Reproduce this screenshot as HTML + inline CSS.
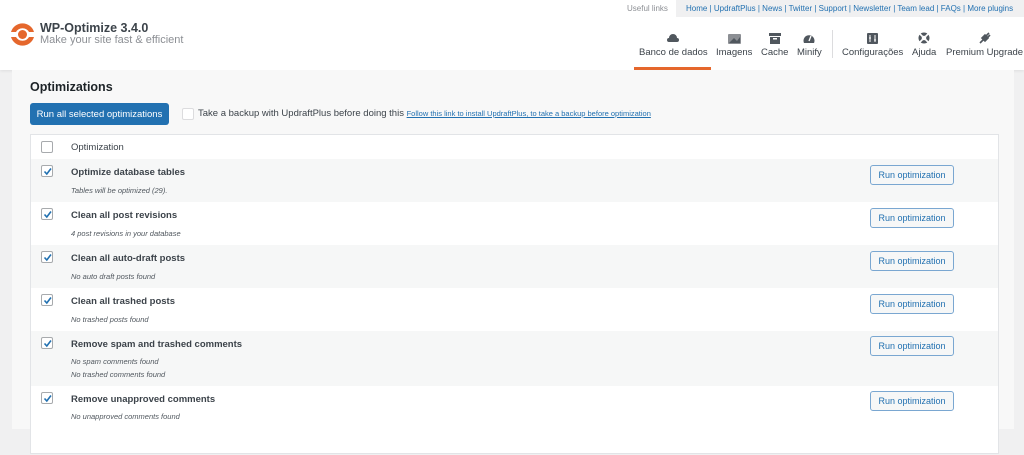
<!DOCTYPE html>
<html><head><meta charset="utf-8"><style>
*{margin:0;padding:0;box-sizing:border-box}
body{width:1024px;height:429px;overflow:hidden;background:#f0f0f1;font-family:"Liberation Sans",sans-serif;color:#3c434a;position:relative}
.hdr{position:absolute;left:0;top:0;width:1024px;height:70px;background:#fff;box-shadow:0 1px 3px rgba(0,0,0,.08)}
.abs{position:absolute;white-space:nowrap}
.tab{position:absolute;left:676px;top:0;width:348px;height:17px;background:#f0f0f1}
.links{font-size:8px;color:#2271b1;top:4px;left:686px}
.nav{top:31px;text-align:center;font-size:9.5px;color:#3c434a}
.nav .ic{height:14px;display:flex;justify-content:center;align-items:center;margin-bottom:2px}
.panel{position:absolute;left:12px;top:70px;width:1002px;height:359px;background:#f8f8f8}
.btn{position:absolute;left:30px;top:103px;width:139px;height:22px;background:#2271b1;color:#fff;font-size:9.5px;border-radius:3px;line-height:23px;text-align:center}
.tbl{position:absolute;left:30px;top:134px;width:969px;height:320px;background:#fff;border:1px solid #e2e4e7}
.row{position:absolute;left:0;width:967px}
.g{background:#f6f7f7}
.cb{position:absolute;left:10px;width:12px;height:12px;border:1px solid #a7aaad;border-radius:2px;background:#fff}
.cb svg{position:absolute;left:1px;top:1px}
.t{position:absolute;left:40px;font-size:9.5px;font-weight:bold;color:#3c434a}
.s{position:absolute;left:40px;font-size:7.5px;font-style:italic;color:#50575e}
.ro{position:absolute;left:839px;width:84px;height:20px;border:1px solid #7aa7d1;border-radius:3px;color:#2271b1;font-size:9px;text-align:center;line-height:18px;background:#f6f7f7}
</style></head><body>
<div class="hdr">
 <svg class="abs" style="left:9px;top:21px" width="27" height="27" viewBox="0 0 27 27"><path d="M2 11 A12 12 0 0 1 25 11 L20 11 A7.5 7.5 0 0 0 7 11 Z" fill="#e5672c"/><path d="M2 16 A12 12 0 0 0 25 16 L20 16 A7.5 7.5 0 0 1 7 16 Z" fill="#e5672c"/><circle cx="13.5" cy="13.5" r="4.5" fill="#e5672c"/></svg>
 <div class="abs" style="left:40px;top:21px;font-size:12.5px;font-weight:bold;color:#3c434a">WP-Optimize 3.4.0</div>
 <div class="abs" style="left:40px;top:34px;font-size:11px;color:#8c8f94">Make your site fast &amp; efficient</div>
 <div class="abs" style="left:627px;top:4px;font-size:8px;color:#8c8f94">Useful links</div>
 <div class="tab"></div>
 <div class="abs links">Home | UpdraftPlus | News | Twitter | Support | Newsletter | Team lead | FAQs | More plugins</div>
 <div class="abs nav" style="left:639px"><div class="ic"><svg width="12" height="8"><path d="M2 8 A2 2 0 0 1 2 4 A4 4 0 0 1 10 4 A2 2 0 0 1 10 8Z" fill="#50575e"/></svg></div>Banco de dados</div>
 <div class="abs nav" style="left:716px"><div class="ic"><svg width="13" height="11"><rect x="0" y="1" width="13" height="10" rx="1" fill="#8c8f94"/><path d="M1 10 L6 5 L9 8 L12 4 L12 10Z" fill="#50575e"/></svg></div>Imagens</div>
 <div class="abs nav" style="left:761px"><div class="ic"><svg width="12" height="11"><rect x="0" y="0" width="12" height="3" fill="#50575e"/><rect x="1" y="4" width="10" height="7" fill="#50575e"/><rect x="4" y="5" width="4" height="1.5" fill="#fff"/></svg></div>Cache</div>
 <div class="abs nav" style="left:797px"><div class="ic"><svg width="12" height="11"><path d="M1 10 A5.5 5.5 0 1 1 11 10Z" fill="#50575e"/><path d="M6 8 L8 3" stroke="#fff" stroke-width="1.3"/></svg></div>Minify</div>
 <div class="abs" style="left:832px;top:30px;width:1px;height:28px;background:#dcdcde"></div>
 <div class="abs nav" style="left:842px"><div class="ic"><svg width="11" height="11"><rect width="11" height="11" rx="1" fill="#50575e"/><path d="M3 2 V9 M8 2 V9 M2 5 H4 M7 7 H9" stroke="#fff" stroke-width="1"/></svg></div>Configurações</div>
 <div class="abs nav" style="left:912px"><div class="ic"><svg width="12" height="12"><circle cx="6" cy="6" r="5.5" fill="#50575e"/><circle cx="6" cy="6" r="2.3" fill="#fff"/><path d="M2 2 L4.5 4.5 M10 2 L7.5 4.5 M2 10 L4.5 7.5 M10 10 L7.5 7.5" stroke="#fff" stroke-width="1.6"/></svg></div>Ajuda</div>
 <div class="abs nav" style="left:946px"><div class="ic"><svg width="12" height="12"><path d="M1 11 L4 8 M3 6 L6 9 L9 6 L6 3Z M7 4 L10 1 M8 6 L11 3" stroke="#50575e" stroke-width="1.6" fill="#50575e"/></svg></div>Premium Upgrade</div>
 <div class="abs" style="left:634px;top:67px;width:77px;height:3px;background:#e5672c"></div>
</div>
<div class="panel"></div>
<div class="abs" style="left:30px;top:80px;font-size:12.5px;font-weight:bold;color:#1d2327">Optimizations</div>
<div class="btn">Run all selected optimizations</div>
<div class="abs" style="left:182px;top:108px;width:12px;height:12px;border:1px solid #dcdcde;border-radius:2px;background:#fff"></div>
<div class="abs" style="left:198px;top:108px;font-size:9.5px;color:#3c434a">Take a backup with UpdraftPlus before doing this <span style="font-size:7.5px;color:#2271b1;text-decoration:underline">Follow this link to install UpdraftPlus, to take a backup before optimization</span></div>
<div class="tbl">
 <div class="row" style="top:0;height:24px"><div class="cb" style="top:6px"></div><div class="t" style="top:7px;font-weight:normal">Optimization</div></div>
 <div class="row g" style="top:24px;height:43px"><div class="cb" style="top:6px"><svg width="9" height="9"><path d="M1.5 4.5 L3.8 7 L8 1.5" stroke="#2271b1" stroke-width="1.6" fill="none"/></svg></div><div class="t" style="top:8px">Optimize database tables</div><div class="s" style="top:27px">Tables will be optimized (29).</div><div class="ro" style="top:6px">Run optimization</div></div>
 <div class="row" style="top:67px;height:43px"><div class="cb" style="top:6px"><svg width="9" height="9"><path d="M1.5 4.5 L3.8 7 L8 1.5" stroke="#2271b1" stroke-width="1.6" fill="none"/></svg></div><div class="t" style="top:8px">Clean all post revisions</div><div class="s" style="top:27px">4 post revisions in your database</div><div class="ro" style="top:6px">Run optimization</div></div>
 <div class="row g" style="top:110px;height:43px"><div class="cb" style="top:6px"><svg width="9" height="9"><path d="M1.5 4.5 L3.8 7 L8 1.5" stroke="#2271b1" stroke-width="1.6" fill="none"/></svg></div><div class="t" style="top:8px">Clean all auto-draft posts</div><div class="s" style="top:27px">No auto draft posts found</div><div class="ro" style="top:6px">Run optimization</div></div>
 <div class="row" style="top:153px;height:43px"><div class="cb" style="top:6px"><svg width="9" height="9"><path d="M1.5 4.5 L3.8 7 L8 1.5" stroke="#2271b1" stroke-width="1.6" fill="none"/></svg></div><div class="t" style="top:8px">Clean all trashed posts</div><div class="s" style="top:27px">No trashed posts found</div><div class="ro" style="top:6px">Run optimization</div></div>
 <div class="row g" style="top:196px;height:55px"><div class="cb" style="top:6px"><svg width="9" height="9"><path d="M1.5 4.5 L3.8 7 L8 1.5" stroke="#2271b1" stroke-width="1.6" fill="none"/></svg></div><div class="t" style="top:8px">Remove spam and trashed comments</div><div class="s" style="top:26px">No spam comments found</div><div class="s" style="top:39px">No trashed comments found</div><div class="ro" style="top:5px">Run optimization</div></div>
 <div class="row" style="top:251px;height:69px"><div class="cb" style="top:6px"><svg width="9" height="9"><path d="M1.5 4.5 L3.8 7 L8 1.5" stroke="#2271b1" stroke-width="1.6" fill="none"/></svg></div><div class="t" style="top:8px">Remove unapproved comments</div><div class="s" style="top:26px">No unapproved comments found</div><div class="ro" style="top:5px">Run optimization</div></div>
</div>
</body></html>
